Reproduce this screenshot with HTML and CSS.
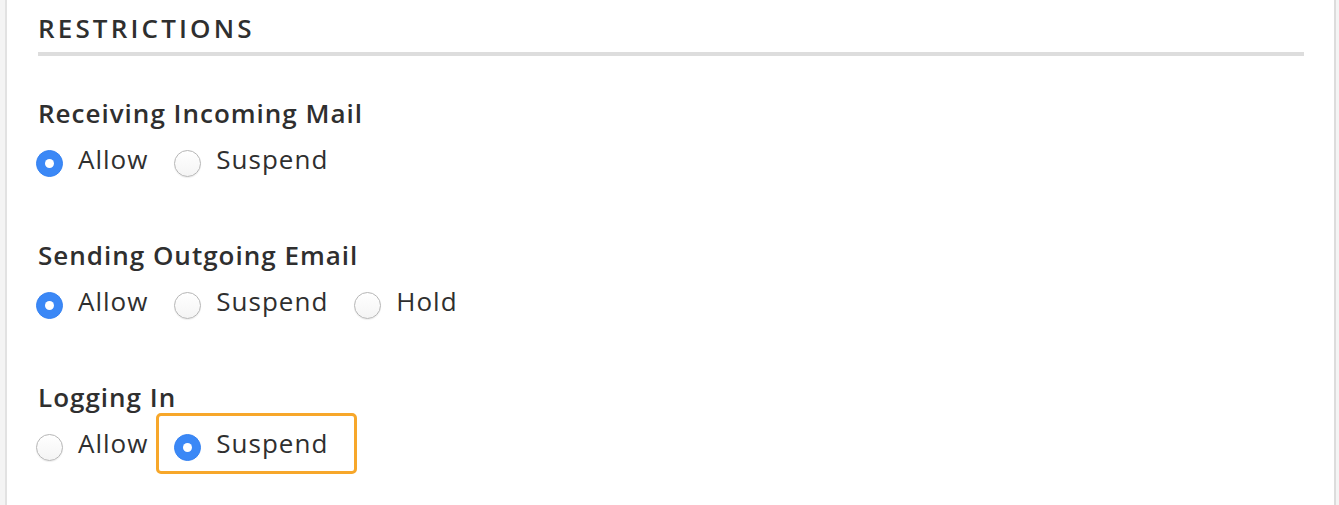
FILE: index.html
```html
<!DOCTYPE html>
<html lang="en">
<head>
<meta charset="utf-8">
<title>Restrictions</title>
<link rel="stylesheet" href="styles.css">
</head>
<body>
<section class="panel">
  <h2 class="panel-title">RESTRICTIONS</h2>

  <div class="group first">
    <div class="group-label">Receiving Incoming Mail</div>
    <div class="options">
      <label class="option"><span class="radio checked"></span><span class="option-text">Allow</span></label>
      <label class="option"><span class="radio"></span><span class="option-text">Suspend</span></label>
    </div>
  </div>

  <div class="group">
    <div class="group-label">Sending Outgoing Email</div>
    <div class="options">
      <label class="option"><span class="radio checked"></span><span class="option-text">Allow</span></label>
      <label class="option"><span class="radio"></span><span class="option-text">Suspend</span></label>
      <label class="option"><span class="radio"></span><span class="option-text">Hold</span></label>
    </div>
  </div>

  <div class="group">
    <div class="group-label">Logging In</div>
    <div class="options">
      <label class="option"><span class="radio"></span><span class="option-text">Allow</span></label>
      <label class="option highlight"><span class="radio checked"></span><span class="option-text">Suspend</span></label>
    </div>
  </div>
</section>
</body>
</html>
```

FILE: styles.css
```css
html, body {
  margin: 0;
  padding: 0;
}

body {
  background: #f4f4f4;
  font-family: "Open Sans", "Liberation Sans", sans-serif;
  color: #2f2f2f;
  height: 505px;
  overflow: hidden;
}

.panel {
  margin: 0 3px 0 5px;
  min-height: 505px;
  box-sizing: border-box;
  background: #ffffff;
  border-left: 2px solid #e2e2e2;
  border-right: 2px solid #dcdcdc;
  padding: 10px 30px 0 31px;
}

.panel-title {
  margin: 0;
  font-size: 26px;
  line-height: 36px;
  font-weight: 600;
  letter-spacing: 3.15px;
  padding-bottom: 6px;
  border-bottom: 4px solid #dddddd;
}

.group {
  margin-top: 59px;
}

.group.first {
  margin-top: 40px;
}

.group-label {
  font-size: 26px;
  line-height: 34px;
  font-weight: 600;
  letter-spacing: 1px;
  margin-bottom: 9px;
}

.options {
  display: flex;
  align-items: center;
  gap: 26px;
  margin-left: -2px;
}

.option {
  position: relative;
  display: flex;
  align-items: center;
  gap: 15px;
  font-size: 26px;
  line-height: 40px;
  letter-spacing: 1px;
}

.radio {
  box-sizing: border-box;
  width: 27px;
  height: 27px;
  margin-top: 8px;
  border-radius: 50%;
  background: linear-gradient(#ffffff, #f4f4f4);
  border: 1px solid #b6b6b6;
  box-shadow: 0 1px 1px rgba(0, 0, 0, 0.07);
  display: flex;
  align-items: center;
  justify-content: center;
  flex: none;
}

.radio.checked {
  background: #3b88f6;
  border-color: #3582f2;
  box-shadow: none;
}

.radio.checked::after {
  content: "";
  width: 9px;
  height: 9px;
  border-radius: 50%;
  background: #ffffff;
}

.highlight::after {
  content: "";
  position: absolute;
  left: -18px;
  right: -29px;
  top: -10px;
  bottom: -11px;
  border: 3px solid #f7a72a;
  border-radius: 5px;
  pointer-events: none;
}
```
